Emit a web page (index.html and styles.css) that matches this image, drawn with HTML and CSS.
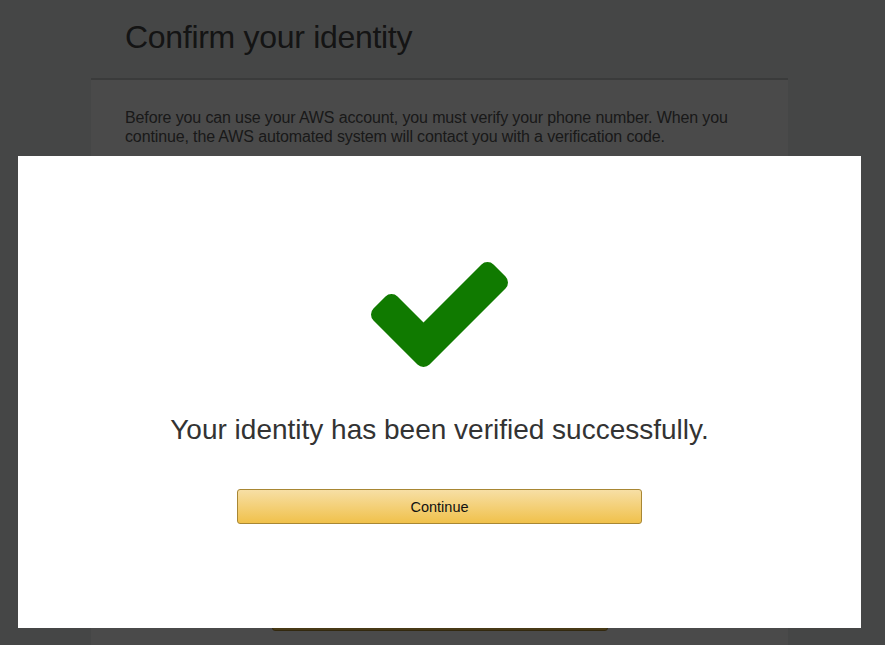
FILE: index.html
```html
<!DOCTYPE html>
<html lang="en">
<head>
<meta charset="utf-8">
<title>Confirm your identity</title>
<link rel="stylesheet" href="styles.css">
</head>
<body>
<div class="page">
  <div class="page-head">
    <h1 class="page-title">Confirm your identity</h1>
  </div>
  <div class="page-body">
    <p class="intro">Before you can use your AWS account, you must verify your phone number. When you continue, the AWS automated system will contact you with a verification code.</p>
    <div class="form-space"></div>
    <div class="bg-action">
      <button class="bg-button" type="button">Call me now</button>
    </div>
  </div>
</div>

<div class="overlay"></div>

<div class="modal" role="dialog">
  <svg class="check" viewBox="121 334 1550 1188" width="137" height="105" aria-hidden="true">
    <path fill="#107a00" d="M1671 566q0 40-28 68l-724 724-136 136q-28 28-68 28t-68-28l-136-136-362-362q-28-28-28-68t28-68l136-136q28-28 68-28t68 28l294 295 656-657q28-28 68-28t68 28l136 136q28 28 28 68z"/>
  </svg>
  <p class="modal-text">Your identity has been verified successfully.</p>
  <button class="continue" type="button">Continue</button>
</div>
</body>
</html>
```

FILE: styles.css
```css
html, body {
  margin: 0;
  padding: 0;
  height: 100%;
  overflow: hidden;
}

body {
  background: #e8ebeb;
  font-family: "Liberation Sans", Arial, sans-serif;
  color: #333;
}

.page {
  width: 697px;
  margin-left: 91px;
  height: 100%;
  display: flex;
  flex-direction: column;
}

.page-head {
  height: 78px;
  padding: 0 34px;
  box-sizing: border-box;
}

.page-title {
  margin: 0;
  padding-top: 17px;
  font-size: 32px;
  letter-spacing: -0.3px;
  line-height: 40px;
  font-weight: normal;
  color: #444;
}

.page-body {
  flex: 1;
  background: #f8f8f8;
  border-top: 2px solid #c4c7c7;
  padding: 28px 34px 0;
}

.intro {
  margin: 0;
  font-size: 16px;
  letter-spacing: -0.13px;
  line-height: 19px;
  color: #555;
}

.form-space {
  height: 449px;
}

.bg-action {
  display: flex;
  justify-content: center;
}

.bg-button {
  width: 336px;
  height: 36px;
  border: 1px solid #a88734;
  border-radius: 3px;
  background: linear-gradient(#f7dfa5, #f0c14b);
  font-family: inherit;
  font-size: 14px;
}

.overlay {
  position: fixed;
  inset: 0;
  background: rgba(0, 0, 0, 0.7);
}

.modal {
  position: fixed;
  left: 18px;
  top: 156px;
  width: 843px;
  height: 472px;
  background: #fff;
  display: flex;
  flex-direction: column;
  align-items: center;
  padding-top: 106px;
  box-sizing: border-box;
}

.check {
  display: block;
}

.modal-text {
  margin: 46px 0 0;
  font-size: 28px;
  line-height: 34px;
  color: #333;
}

.continue {
  margin-top: 42px;
  width: 405px;
  height: 35px;
  border: 1px solid #a88734;
  border-radius: 3px;
  background: linear-gradient(#f7dfa5, #f0c14b);
  font-family: "Liberation Sans", Arial, sans-serif;
  font-size: 14.5px;
  color: #111;
  padding: 0;
}
```
